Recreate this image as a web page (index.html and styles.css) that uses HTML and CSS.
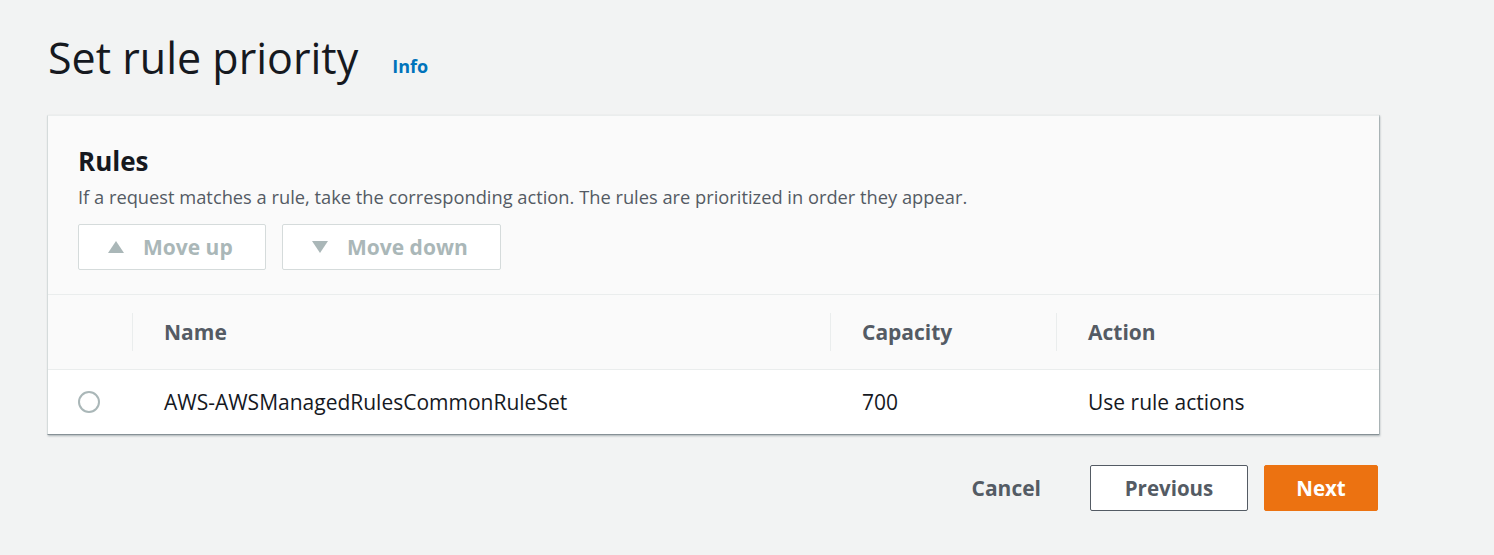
FILE: index.html
```html
<!DOCTYPE html>
<html>
<head>
<meta charset="utf-8">
<link rel="stylesheet" href="styles.css">
</head>
<body>
<div class="page">
  <div class="title-row">
    <h1 class="title">Set rule priority</h1>
    <a class="info" href="#">Info</a>
  </div>
  <div class="card">
    <div class="card-head">
      <h2 class="card-title">Rules</h2>
      <p class="card-desc">If a request matches a rule, take the corresponding action. The rules are prioritized in order they appear.</p>
      <div class="actions">
        <button class="btn-disabled btn-up"><svg class="tri" width="16" height="12" viewBox="0 0 16 12"><path d="M8 0 L16 12 L0 12 Z" fill="#aab7b8"/></svg><span>Move up</span></button>
        <button class="btn-disabled btn-down"><svg class="tri" width="16" height="12" viewBox="0 0 16 12"><path d="M0 0 L16 0 L8 12 Z" fill="#aab7b8"/></svg><span>Move down</span></button>
      </div>
    </div>
    <div class="table">
      <div class="thead">
        <div class="cell c-sel"></div>
        <div class="cell c-name th sep">Name</div>
        <div class="cell c-cap th sep">Capacity</div>
        <div class="cell c-act th sep">Action</div>
      </div>
      <div class="trow">
        <div class="cell c-sel"><span class="radio"></span></div>
        <div class="cell c-name td">AWS-AWSManagedRulesCommonRuleSet</div>
        <div class="cell c-cap td">700</div>
        <div class="cell c-act td">Use rule actions</div>
      </div>
    </div>
  </div>
  <div class="footer">
    <a class="cancel" href="#">Cancel</a>
    <button class="btn-prev">Previous</button>
    <button class="btn-next">Next</button>
  </div>
</div>
</body>
</html>
```

FILE: styles.css
```css
* { box-sizing: border-box; }
html, body { margin: 0; padding: 0; }
body {
  background: #f2f3f3;
  font-family: "Open Sans", "Noto Sans", sans-serif;
  color: #16191f;
}
.page {
  width: 1332px;
  margin-left: 47px;
  padding-top: 28px;
}
.title-row {
  display: flex;
  align-items: baseline;
  height: 87px;
  padding-left: 1px;
}
.title {
  margin: 0;
  font-size: 43px;
  font-weight: 400;
  line-height: 60px;
  color: #16191f;
}
.info {
  margin-left: 34px;
  font-size: 18px;
  font-weight: 700;
  color: #0073bb;
  text-decoration: none;
  position: relative;
  top: -1px;
}
.card {
  background: #fff;
  border-bottom: 1px solid #879196;
  box-shadow: 1px 1px 2px rgba(0,28,36,0.3), 1px 0 0 #d5dbdb;
  border-top: 1px solid #eaeded;
  border-left: 1px solid #d5dbdb;
}
.card-head {
  background: #fafafa;
  padding: 28px 30px 24px;
  border-bottom: 1px solid #eaeded;
}
.card-title {
  margin: 0;
  font-size: 26px;
  font-weight: 700;
  line-height: 34px;
}
.card-desc {
  margin: 6px 0 0;
  font-size: 18.3px;
  color: #545b64;
  line-height: 26px;
}
.actions {
  display: flex;
  gap: 16px;
  margin-top: 14px;
}
.btn-disabled {
  display: flex;
  align-items: center;
  height: 46px;
  background: #fff;
  border: 1px solid #d5dbdb;
  border-radius: 2px;
  font-family: inherit;
  font-size: 21px;
  font-weight: 700;
  color: #aab7b8;
  padding: 0 0 0 29px;
}
.btn-disabled .tri { margin-right: 19px; }
.btn-up { width: 188px; }
.btn-down { width: 219px; }
.table { background: #fff; }
.thead {
  display: flex;
  height: 75px;
  background: #fafafa;
  border-bottom: 1px solid #eaeded;
  align-items: center;
}
.trow {
  display: flex;
  height: 64px;
  align-items: center;
}
.cell { height: 100%; display: flex; align-items: center; }
.c-sel { width: 84px; padding-left: 30px; }
.c-name { width: 698px; }
.c-cap { width: 226px; }
.c-act { flex: 1; }
.th {
  font-size: 21px;
  font-weight: 700;
  color: #545b64;
  padding-left: 32px;
  position: relative;
}
.sep::before {
  content: "";
  position: absolute;
  left: 0;
  top: 18px;
  bottom: 18px;
  border-left: 1px solid #eaeded;
}
.td {
  font-size: 21px;
  color: #16191f;
  padding-left: 32px;
}
.radio {
  width: 22px;
  height: 22px;
  border: 2px solid #aab7b8;
  border-radius: 50%;
  background: #fff;
}
.footer {
  display: flex;
  justify-content: flex-end;
  align-items: center;
  margin-top: 30px;
  padding-right: 1px;
}
.cancel {
  font-size: 21px;
  font-weight: 700;
  color: #545b64;
  text-decoration: none;
  margin-right: 49px;
}
.btn-prev, .btn-next {
  height: 46px;
  font-family: inherit;
  font-size: 20.5px;
  font-weight: 700;
  border-radius: 2px;
}
.btn-prev {
  width: 158px;
  background: #fff;
  border: 1px solid #545b64;
  color: #545b64;
  margin-right: 16px;
}
.btn-next {
  width: 114px;
  background: #ec7211;
  border: 1px solid #ec7211;
  color: #fff;
}
```
